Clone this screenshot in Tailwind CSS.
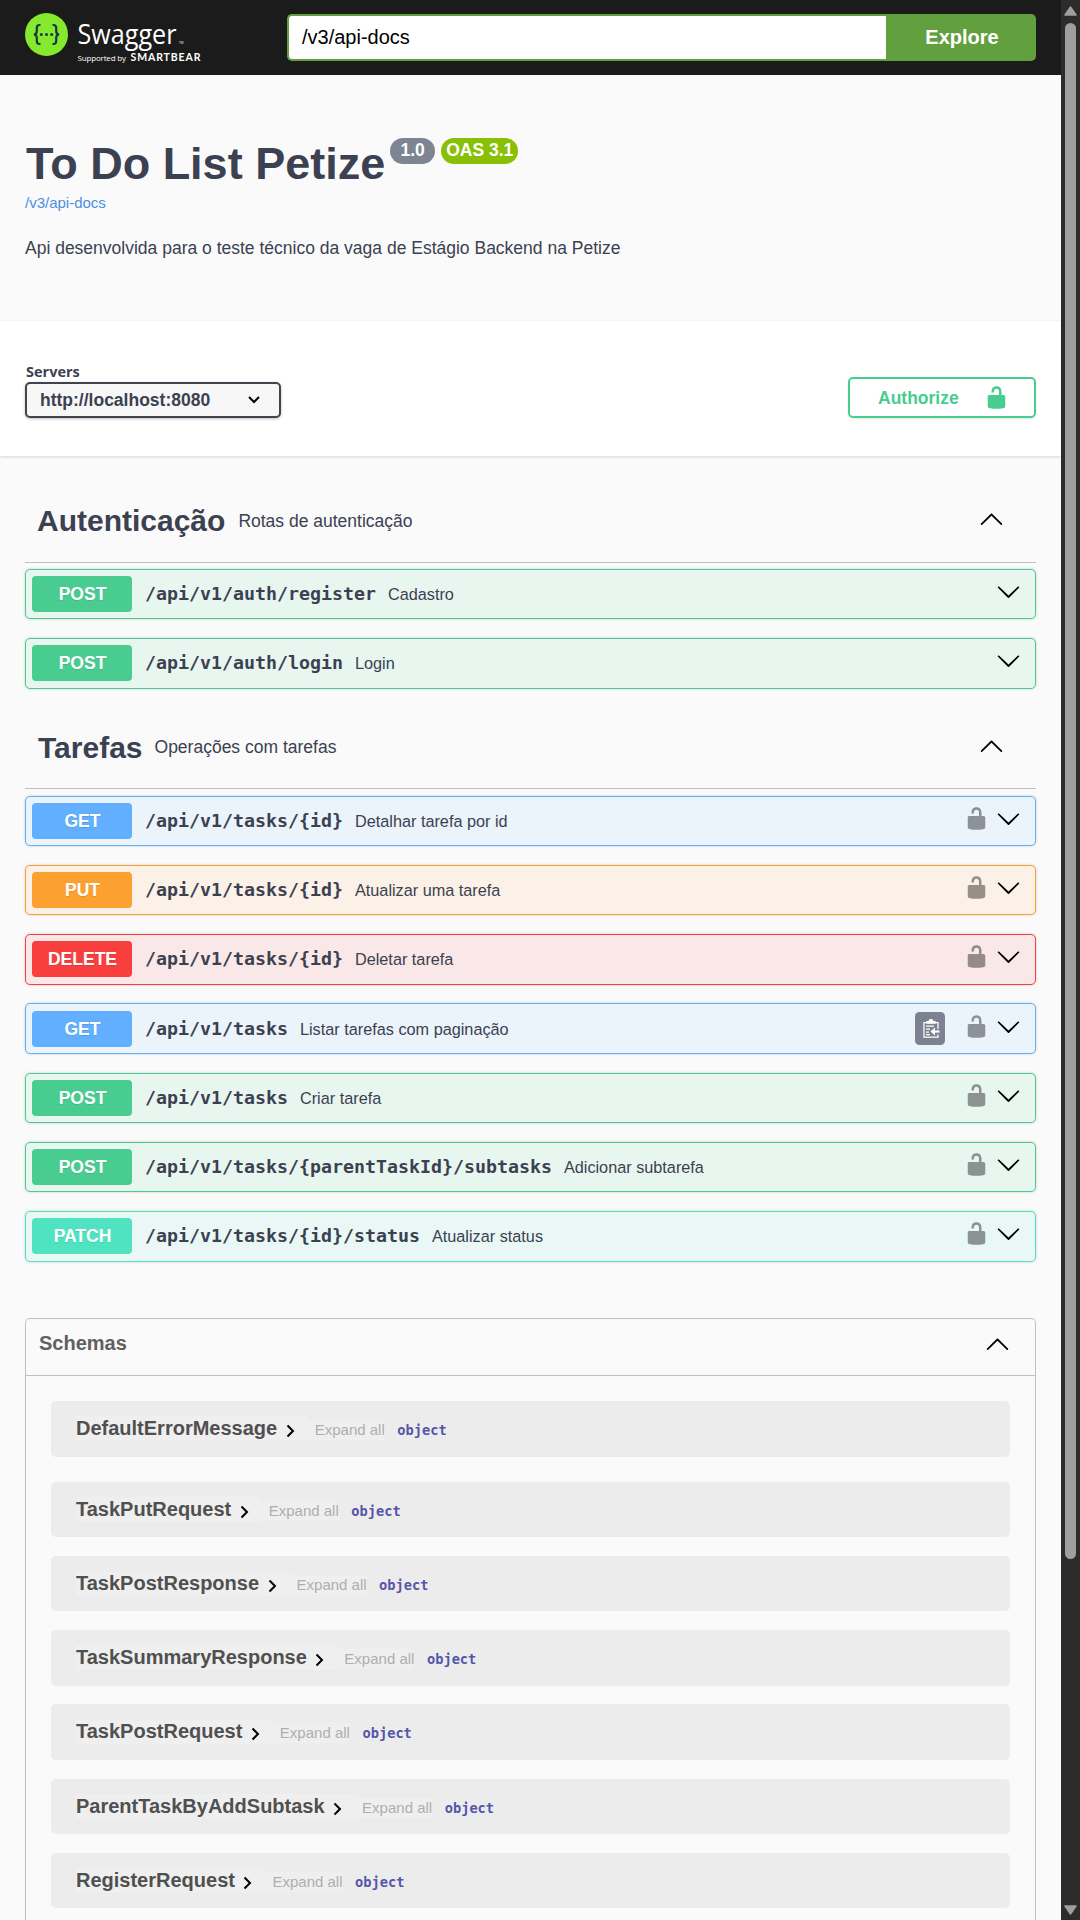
<!DOCTYPE html>
<html lang="pt-BR">
<head>
<meta charset="utf-8">
<title>Swagger UI</title>
<script src="https://cdn.jsdelivr.net/npm/@tailwindcss/browser@4"></script>
</head>
<body class="flex h-[1920px] w-[1080px] overflow-hidden bg-[#fafafa] font-['Liberation_Sans',Arial,sans-serif] text-[#3b4151]">
<svg class="hidden">
  <symbol id="down" viewBox="0 0 20 20"><path d="M17.418 6.109c.272-.268.709-.268.979 0s.271.701 0 .969l-7.908 7.83c-.27.268-.707.268-.979 0l-7.908-7.83c-.27-.268-.27-.701 0-.969.271-.268.709-.268.979 0L10 13.25z"/></symbol>
  <symbol id="up" viewBox="0 0 20 20"><path d="M17.418 14.908c.272.268.709.268.979 0s.271-.701 0-.969l-7.908-7.83c-.27-.268-.707-.268-.979 0l-7.908 7.83c-.27.268-.27.701 0 .969.271.268.709.268.979 0L10 7.767z"/></symbol>
  <symbol id="unlocked" viewBox="0 0 20 20"><path d="M15.8 8H14V5.6C14 2.703 12.665 1 10 1 7.334 1 6 2.703 6 5.6V6h2v-.801C8 3.754 8.797 3 10 3c1.203 0 2 .754 2 2.199V8H4c-.553 0-1 .646-1 1.199V17c0 .549.428 1.139.951 1.307l1.197.387C5.672 18.861 6.55 19 7.1 19h5.8c.549 0 1.428-.139 1.951-.307l1.196-.387c.524-.167.953-.757.953-1.306V9.199C17 8.646 16.352 8 15.8 8z"/></symbol>
  <symbol id="right" viewBox="0 0 12 14"><path d="M2.5 1.500l5.500 5.500-5.500 5.500" fill="none" stroke="#000" stroke-width="2"/></symbol>
</svg>

<main class="flex h-[1920px] w-[1061px] shrink-0 flex-col overflow-hidden">
  <header class="flex h-[75px] shrink-0 items-start bg-[#1b1b1b] pl-[25px]">
    <svg class="mt-[13px] h-[52px] w-[180px] shrink-0" viewBox="0 0 180 52">
      <circle cx="21.5" cy="21.5" r="21.5" fill="#85ea2d"/>
      <g fill="none" stroke="#173647" stroke-width="2.2">
        <path d="M15.500 12H14.500q-2.700 0-2.700 3v3q0 3.500-3 3.500q3 0 3 3.500v3q0 3 2.700 3h1"/>
        <path d="M27.500 12h1q2.700 0 2.700 3v3q0 3.500 3 3.500q-3 0-3 3.500v3q0 3-2.700 3h-1"/>
      </g>
      <g fill="#173647"><circle cx="16.300" cy="21.500" r="1.500"/><circle cx="21.500" cy="21.500" r="1.500"/><circle cx="26.700" cy="21.500" r="1.500"/></g>
      <text x="52.500" y="30.500" textLength="99" lengthAdjust="spacingAndGlyphs" class="font-['Open_Sans',sans-serif] text-[28px]" fill="#fff">Swagger</text>
      <text x="154" y="31" class="font-['Open_Sans',sans-serif] text-[3px]" fill="#fff">TM</text>
      <text x="52.500" y="48" textLength="48.500" class="font-['Open_Sans',sans-serif] text-[8px]" fill="#fff">Supported by</text>
      <text x="105.500" y="48" textLength="70" class="font-['Lato',sans-serif] text-[10.500px] font-bold" fill="#fff">SMARTBEAR</text>
    </svg>
    <div class="mt-[14px] ml-[82px] flex h-[47px] w-[749px] text-[20px] leading-[43px]">
      <div class="w-[599px] rounded-l-[5px] border-2 border-r-0 border-[#62a03f] bg-white pl-[13px] text-black">/v3/api-docs</div>
      <div class="w-[150px] rounded-r-[5px] bg-[#62a03f] pt-[2px] pl-[2px] text-center font-bold text-white">Explore</div>
    </div>
  </header>

  <section class="flex h-[246px] shrink-0 flex-col pl-[25px]">
    <div class="mt-[62px] flex h-[52px] items-start">
      <h1 class="mt-px ml-px text-[45px] leading-[52px] font-bold">To Do List Petize</h1>
      <span class="mt-[1px] ml-[5px] h-[26px] w-[45px] rounded-full bg-[#7d8492] text-center text-[17.500px] leading-[24px] font-bold text-white">1.0</span>
      <span class="mt-[1px] ml-[6px] h-[26px] w-[77px] rounded-full bg-[#89bf04] text-center text-[17.500px] leading-[24px] font-bold text-white">OAS 3.1</span>
    </div>
    <a class="mt-[4px] text-[15px] leading-[20px] text-[#4990e2]">/v3/api-docs</a>
    <p class="mt-[25px] text-[17.500px] leading-[20px]">Api desenvolvida para o teste técnico da vaga de Estágio Backend na Petize</p>
  </section>

  <section class="flex h-[135px] shrink-0 justify-between bg-white pr-[25px] pl-[25px] shadow-[0_1px_3px_rgba(0,0,0,0.15)]">
    <div class="pt-[41px]">
      <div class="pl-px font-['Open_Sans',sans-serif] text-[14.500px] leading-[20px] font-bold">Servers</div>
      <div class="flex h-[36px] w-[256px] items-center justify-between rounded-[5px] border-2 border-[#41444e] bg-[#f7f7f7] pr-[18px] pl-[13px] text-[17.500px] leading-[20px] font-bold shadow-[0_1px_3px_rgba(0,0,0,0.25)]">http://localhost:8080
        <svg class="h-[10px] w-[14px]" viewBox="0 0 14 10"><path d="M2 2l5 5 5-5" fill="none" stroke="#000" stroke-width="2"/></svg>
      </div>
    </div>
    <div class="mt-[56px] flex h-[41px] w-[188px] rounded-[5px] border-2 border-[#49cc90] pl-[28px] text-[17.500px] font-bold text-[#49cc90] shadow-[0_1px_2px_rgba(0,0,0,0.1)]">
      <span class="w-[106px] pt-[8px] leading-[22px]">Authorize</span>
      <svg class="mt-[6px] size-[25px]" fill="#49cc90"><use href="#unlocked"/></svg>
    </div>
  </section>

  <section class="px-[25px]">
    <div class="flex h-[107px] items-start border-b border-[#bfc0c4] pl-[12px]">
      <h3 class="mt-[47px] text-[30px] leading-[36px] font-bold">Autenticação</h3>
      <p class="mt-[54px] ml-[13px] grow text-[17.500px] leading-[22px]">Rotas de autenticação</p>
      <svg class="mt-[50px] mr-[32px] size-[25px]"><use href="#up"/></svg>
    </div>
    <div id="auth" class="pt-[6px]"></div>
    <div class="flex h-[81px] items-start border-b border-[#bfc0c4] pl-[13px]">
      <h3 class="mt-[22px] text-[30px] leading-[36px] font-bold">Tarefas</h3>
      <p class="mt-[28px] ml-[12px] grow text-[17.500px] leading-[22px]">Operações com tarefas</p>
      <svg class="mt-[25px] mr-[32px] size-[25px]"><use href="#up"/></svg>
    </div>
    <div id="tasks" class="pt-[7px]"></div>
  </section>

  <section class="mx-[25px] mt-[37px] min-h-0 flex-1 overflow-hidden rounded-t-[5px] border border-b-0 border-[#bfc0c4]">
    <div class="flex h-[57px] items-start justify-between border-b border-[#bfc0c4] pr-[25px] pl-[13px]">
      <h4 class="mt-[12px] text-[20px] leading-[24px] font-bold text-[#606060]">Schemas</h4>
      <svg class="mt-[12px] size-[25px]"><use href="#up"/></svg>
    </div>
    <div id="schemas" class="px-[25px] pt-[25px]"></div>
  </section>
</main>

<aside class="flex w-[19px] flex-col items-center bg-[#2c2c2c]">
  <svg class="mt-[6px] h-[10px] w-[13px]" viewBox="0 0 13 10"><path d="M6.500 1L12 9H1z" fill="#9f9f9f" stroke="#9f9f9f" stroke-width="1.500" stroke-linejoin="round"/></svg>
  <div class="mt-[7px] h-[1536px] w-[11px] rounded-full bg-[#9f9f9f]"></div>
  <svg class="mt-[346px] h-[10px] w-[13px]" viewBox="0 0 13 10"><path d="M6.500 9L1 1h11z" fill="#9f9f9f" stroke="#9f9f9f" stroke-width="1.500" stroke-linejoin="round"/></svg>
</aside>

<script>
const theme = {
  POST: ['border-[#49cc90] bg-[#e8f6f0]', 'bg-[#49cc90]'],
  GET: ['border-[#61affe] bg-[#ebf3fb]', 'bg-[#61affe]'],
  PUT: ['border-[#fca130] bg-[#fbf1e6]', 'bg-[#fca130]'],
  DELETE: ['border-[#f93e3e] bg-[#fae7e7]', 'bg-[#f93e3e]'],
  PATCH: ['border-[#50e3c2] bg-[#e9f8f5]', 'bg-[#50e3c2]'],
};
const copy = `<svg class="mt-[7px] mr-[19px] h-[33px] w-[30px] shrink-0" viewBox="0 0 30 33"><rect width="30" height="33" rx="4.500" fill="#7d8293"/><g fill="none" stroke="#fff" stroke-width="1.250"><path d="M23 17v-6.500H9V25h14v-2.500"/><path d="M12 11V9.500h2q.2-1.800 2-1.800t2 1.800h2V11z" fill="#fff"/><path d="M11 14h8M11 17h4M11 20h3M11 22.500h4"/><path d="M24.500 19.500H19" stroke-width="2.200"/></g><path d="M20 15.500v8l-4.500-4z" fill="#fff"/></svg>`;
const row = ([m, path, text, size, lock, clip]) => `
  <div class="flex items-start rounded-[5px] border shadow-[0_0_3px_rgba(0,0,0,0.19)] ${size} ${theme[m][0]}">
    <span class="mt-[6px] ml-[6px] h-[36px] w-[100px] rounded-[4px] pl-px text-center text-[17.500px] leading-[36px] font-bold text-white [text-shadow:0_1px_0_rgba(0,0,0,0.1)] ${theme[m][1]}">${m}</span>
    <span class="mt-[13px] ml-[13px] font-['DejaVu_Sans_Mono',monospace] text-[18.270px] leading-[22px] font-bold">${path}</span>
    <span class="mt-[13px] ml-[12px] grow text-[16.250px] leading-[22px]">${text}</span>
    ${clip ? copy : ''}
    ${lock ? '<svg class="mt-[9px] mr-[7px] size-[25px] opacity-40"><use href="#unlocked"/></svg>' : ''}
    <svg class="mt-[9px] mr-[14px] size-[25px]"><use href="#down"/></svg>
  </div>`;
document.getElementById('auth').innerHTML = [
  ['POST', '/api/v1/auth/register', 'Cadastro', 'h-[50px] mb-[19px]'],
  ['POST', '/api/v1/auth/login', 'Login', 'h-[51px] mb-[19px]'],
].map(row).join('');
document.getElementById('tasks').innerHTML = [
  ['GET', '/api/v1/tasks/{id}', 'Detalhar tarefa por id', 'h-[50px] mb-[19px]', 1],
  ['PUT', '/api/v1/tasks/{id}', 'Atualizar uma tarefa', 'h-[50px] mb-[19px]', 1],
  ['DELETE', '/api/v1/tasks/{id}', 'Deletar tarefa', 'h-[51px] mb-[18px]', 1],
  ['GET', '/api/v1/tasks', 'Listar tarefas com paginação', 'h-[51px] mb-[19px] pt-px', 1, 1],
  ['POST', '/api/v1/tasks', 'Criar tarefa', 'h-[50px] mb-[19px]', 1],
  ['POST', '/api/v1/tasks/{parentTaskId}/subtasks', 'Adicionar subtarefa', 'h-[50px] mb-[19px]', 1],
  ['PATCH', '/api/v1/tasks/{id}/status', 'Atualizar status', 'h-[51px] mb-[19px]', 1],
].map(row).join('');
document.getElementById('schemas').innerHTML = [
  ['DefaultErrorMessage', 'h-[56px] mb-[25px]'],
  ['TaskPutRequest', 'h-[55px] mb-[19px]'],
  ['TaskPostResponse', 'h-[55px] mb-[19px]'],
  ['TaskSummaryResponse', 'h-[56px] mb-[18px]'],
  ['TaskPostRequest', 'h-[56px] mb-[19px]'],
  ['ParentTaskByAddSubtask', 'h-[55px] mb-[19px]'],
  ['RegisterRequest', 'h-[55px]'],
].map(([name, size]) => `
  <div class="flex items-start rounded-[5px] bg-[#ececec] pl-[25px] ${size}">
    <span class="mt-[15px] flex h-[25px] bg-[#efefef] text-[20px] leading-[24px] font-bold text-[#505050]">${name}<svg class="mt-[8px] mr-[10px] ml-[7.500px] h-[14px] w-[12px]"><use href="#right"/></svg></span>
    <span class="mt-[19px] h-[20px] bg-[#efefef] pl-[8px] text-[15px] leading-[20px] text-[#afaeae]">Expand all</span>
    <span class="mt-[19px] ml-[12.500px] font-['DejaVu_Sans_Mono',monospace] text-[13.700px] leading-[21px] font-bold text-[#5555aa]">object</span>
  </div>`).join('');
</script>
</body>
</html>
